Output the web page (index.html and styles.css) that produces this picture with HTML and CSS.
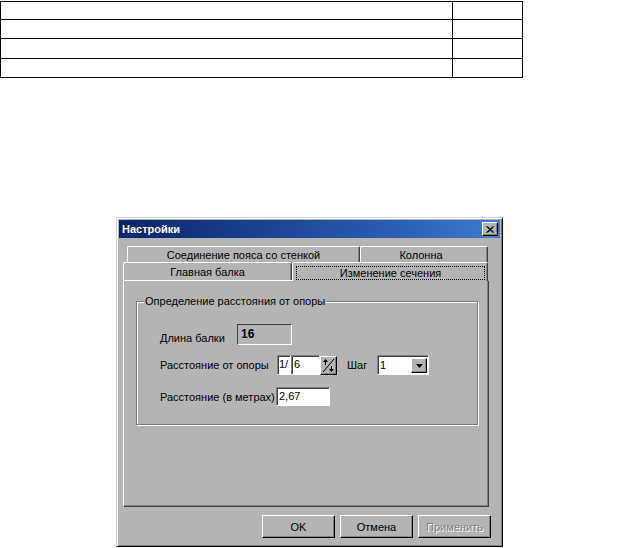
FILE: index.html
```html
<!DOCTYPE html>
<html>
<head>
<meta charset="utf-8">
<link rel="stylesheet" href="styles.css">
</head>
<body>
<div class="sheet">
  <div class="row r-a"><div class="cell1"></div><div class="cell2"></div></div>
  <div class="row r-b"><div class="cell1"></div><div class="cell2"></div></div>
  <div class="row r-c"><div class="cell1"></div><div class="cell2"></div></div>
  <div class="row r-d"><div class="cell1"></div><div class="cell2"></div></div>
</div>

<div class="dlg">
  <div class="titlebar">
    <span class="title">Настройки</span>
    <span class="close"><svg width="8" height="7" viewBox="0 0 8 7"><path d="M0.5 0.5 L7 6.5 M1.5 0.5 L8 6.5 M7 0.5 L0.5 6.5 M8 0.5 L1.5 6.5" stroke="#000" stroke-width="1" fill="none"/></svg></span>
  </div>
  <div class="tabs">
    <div class="tabrow back">
      <div class="tab t1">Соединение пояса со стенкой</div>
      <div class="tab t2">Колонна</div>
    </div>
    <div class="tabrow front">
      <div class="tab t3">Главная балка</div>
      <div class="tab t4"><span class="focus">Изменение сечения</span></div>
    </div>
  </div>
  <div class="panel">
    <div class="group">
      <span class="legend">Определение расстояния от опоры</span>
      <div class="frow f1">
        <span class="lbl l1">Длина балки</span>
        <span class="static">16</span>
      </div>
      <div class="frow f2">
        <span class="lbl l2">Расстояние от опоры</span>
        <span class="edit e-frac">1/</span>
        <span class="edit e-num">6</span>
        <span class="spin"><svg width="13" height="15" viewBox="0 0 13 15"><path d="M1 14 L12 1" stroke="#000" stroke-width="1"/><path d="M3.5 1 L1 4 H3 V7 H4 V4 H6 Z" fill="#000"/><path d="M9.5 14 L12 11 H10 V8 H9 V11 H7 Z" fill="#000"/></svg></span>
        <span class="lbl l3">Шаг</span>
        <span class="combo"><span class="combo-val">1</span><span class="combo-btn"><svg width="7" height="4" viewBox="0 0 7 4"><path d="M0 0 H7 L3.5 4 Z" fill="#000"/></svg></span></span>
      </div>
      <div class="frow f3">
        <span class="lbl l4">Расстояние (в метрах)</span>
        <span class="edit e-m">2,67</span>
      </div>
    </div>
  </div>
  <div class="buttons">
    <button class="btn">OK</button>
    <button class="btn">Отмена</button>
    <button class="btn disabled">Применить</button>
  </div>
</div>
</body>
</html>
```

FILE: styles.css
```css
* { box-sizing: border-box; }

body {
  margin: 0;
  background: #fff;
  font-family: "Liberation Sans", Arial, sans-serif;
  font-size: 11px;
  color: #000;
}

/* top sheet table */
.sheet {
  width: 523px;
  margin-top: 1px;
  border: 1px solid #000;
  border-bottom: none;
}
.row {
  display: flex;
  border-bottom: 1px solid #000;
}
.r-a { height: 18px; }
.r-b { height: 19px; }
.r-c { height: 20px; }
.r-d { height: 19px; }
.cell1 {
  width: 452px;
  border-right: 1px solid #000;
}
.cell2 { flex: 1; }

/* dialog */
.dlg {
  margin: 139px 0 0 116px;
  width: 387px;
  height: 330px;
  background: #b4b4b4;
  border: 1px solid;
  border-color: #d8d8d8 #000 #000 #d8d8d8;
  box-shadow: inset 1px 1px 0 #fff, inset -1px -1px 0 #808080;
  padding: 2px;
  display: flex;
  flex-direction: column;
}

.titlebar {
  height: 18px;
  background: linear-gradient(90deg, #0a246a 0%, #2a5cb0 70%, #3f7ad0 100%);
  display: flex;
  align-items: center;
  justify-content: space-between;
  padding: 0 2px 0 3px;
}
.title {
  color: #fff;
  font-weight: bold;
  font-size: 11px;
}
.close {
  width: 16px;
  height: 14px;
  background: #b4b4b4;
  border: 1px solid;
  border-color: #fff #000 #000 #fff;
  box-shadow: inset -1px -1px 0 #808080;
  display: flex;
  align-items: center;
  justify-content: center;
}

/* tabs */
.tabs {
  margin-top: 8px;
  padding-left: 4px;
}
.tabrow { display: flex; }
.back {
  height: 16px;
  margin-left: 4px;
}
.front {
  height: 18px;
  align-items: flex-start;
}
.tab {
  height: 100%;
  border: 1px solid;
  border-bottom: none;
  border-color: #fff #404040 transparent #fff;
  border-radius: 2px 2px 0 0;
  box-shadow: inset -1px 0 0 #808080;
  display: flex;
  align-items: center;
  justify-content: center;
  white-space: nowrap;
}
.t1 { width: 233px; }
.t2 { width: 128px; padding-right: 6px; }
.t3 { width: 169px; }
.t4 {
  width: 196px;
  height: 19px;
  margin-bottom: -1px;
  position: relative;
  z-index: 1;
  background: #b4b4b4;
  padding: 2px 2px 1px 3px;
}
.focus {
  flex: 1;
  height: 14px;
  border: 1px dotted #000;
  display: flex;
  align-items: center;
  justify-content: center;
}

/* panel */
.panel {
  margin-left: 4px;
  width: 366px;
  height: 227px;
  border: 1px solid;
  border-color: #fff #404040 #404040 #fff;
  box-shadow: inset -1px -1px 0 #808080;
  padding: 20px 11px 0 12px;
}
.group {
  position: relative;
  width: 342px;
  height: 124px;
  border: 1px solid #808080;
  box-shadow: inset 1px 1px 0 #fff, 1px 1px 0 #fff;
  padding: 22px 0 0 23px;
}
.legend {
  position: absolute;
  left: 7px;
  top: -7px;
  background: #b4b4b4;
  padding: 0 1px;
  line-height: 13px;
}

.frow {
  display: flex;
  align-items: center;
}
.f1 { height: 21px; align-items: flex-end; }
.f2 { height: 20px; margin-top: 10px; }
.f3 { height: 19px; margin-top: 12px; }

.lbl { white-space: nowrap; }
.l1 { width: 77px; line-height: 13px; }
.l2 { width: 117px; }
.l3 { width: 30px; margin-left: 10px; }
.l4 { width: 116px; }

.static {
  width: 55px;
  height: 21px;
  border: 1px solid;
  border-color: #404040 #fff #fff #404040;
  font-weight: bold;
  font-size: 12px;
  padding: 3px 0 0 3px;
  line-height: 13px;
}

.edit {
  height: 100%;
  background: #fff;
  border: 1px solid;
  border-color: #808080 #fff #fff #808080;
  box-shadow: inset 1px 1px 0 #404040;
  padding: 2px 0 0 2px;
  line-height: 13px;
}
.e-frac { width: 14px; padding-left: 1px; }
.e-num { width: 29px; }
.e-m { width: 54px; }

.spin {
  width: 17px;
  height: 19px;
  background: #b4b4b4;
  border: 1px solid;
  border-color: #fff #000 #000 #fff;
  box-shadow: inset -1px -1px 0 #808080;
  display: flex;
  align-items: center;
  justify-content: center;
}

.combo {
  width: 52px;
  height: 20px;
  background: #fff;
  border: 1px solid;
  border-color: #808080 #fff #fff #808080;
  box-shadow: inset 1px 1px 0 #404040;
  display: flex;
  padding: 2px 1px 1px 2px;
}
.combo-val {
  flex: 1;
  line-height: 14px;
}
.combo-btn {
  width: 16px;
  background: #b4b4b4;
  border: 1px solid;
  border-color: #fff #000 #000 #fff;
  box-shadow: inset -1px -1px 0 #808080;
  display: flex;
  align-items: center;
  justify-content: center;
}

/* buttons */
.buttons {
  display: flex;
  justify-content: flex-end;
  gap: 5px;
  margin-top: 8px;
  padding-right: 9px;
}
.btn {
  width: 73px;
  height: 23px;
  background: #b4b4b4;
  border: 1px solid;
  border-color: #fff #000 #000 #fff;
  box-shadow: inset -1px -1px 0 #808080;
  font-family: "Liberation Sans", Arial, sans-serif;
  font-size: 11px;
  color: #000;
  padding: 0;
}
.btn.disabled {
  color: #808080;
  text-shadow: 1px 1px 0 #fff;
}
```
